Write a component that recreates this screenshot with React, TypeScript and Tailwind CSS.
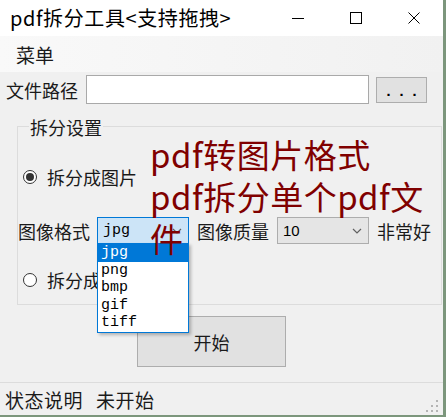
import React from "react";

const cjk = "font-['Noto_Sans_CJK_SC','Liberation_Sans',sans-serif]";

function Chevron() {
  return (
    <svg width="10" height="6" viewBox="0 0 10 6">
      <polyline points="1,1 5,5 9,1" fill="none" stroke="#606060" strokeWidth="1.2" />
    </svg>
  );
}

function Radio({ checked, label, clip }: { checked?: boolean; label: string; clip?: boolean }) {
  return (
    <div className="h-[20px] flex items-center pl-[5px]">
      <div className="w-[14px] h-[14px] rounded-full border border-[#333333] bg-white flex items-center justify-center shrink-0">
        {checked && <div className="w-[8px] h-[8px] rounded-full bg-[#333333]" />}
      </div>
      <span
        className={`ml-[10px] text-[18px] leading-[20px] text-[#1a1a1a] whitespace-nowrap ${clip ? "w-[51px] overflow-hidden" : ""}`}
      >
        {label}
      </span>
    </div>
  );
}

function WindowControls() {
  return (
    <div className="ml-auto flex">
      <div className="w-[58px] h-[36px] flex items-center justify-center">
        <div className="w-[12px] h-px bg-black" />
      </div>
      <div className="w-[58px] h-[36px] flex items-center justify-center">
        <div className="w-[12px] h-[12px] border border-black" />
      </div>
      <div className="w-[58px] h-[36px] flex items-center justify-center">
        <svg width="12" height="12" viewBox="0 0 12 12">
          <path d="M0.5 0.5 L11.5 11.5 M11.5 0.5 L0.5 11.5" stroke="black" strokeWidth="1" />
        </svg>
      </div>
    </div>
  );
}

function Grip() {
  const dots = [
    [9, 0],
    [4, 5],
    [9, 5],
    [-1, 10],
    [4, 10],
    [9, 10],
  ];
  return (
    <svg width="12" height="13" viewBox="-1 0 12 13" className="ml-auto mr-[5px] mt-[14px]">
      {dots.map(([x, y], i) => (
        <rect key={i} x={x} y={y} width="2" height="2" fill="#b4b4b4" />
      ))}
    </svg>
  );
}

export default function App() {
  const formats = ["jpg", "png", "bmp", "gif", "tiff"];
  return (
    <div
      className={`relative w-[446px] h-[417px] flex flex-col bg-[#f0f0f0] border-r-[3px] border-b-2 border-[#7c967c] overflow-hidden text-black ${cjk}`}
    >
      {/* title bar */}
      <div className="h-[36px] bg-white flex items-center shrink-0">
        <span className="pl-[10px] text-[20px] tracking-[0.6px] leading-none">pdf拆分工具&lt;支持拖拽&gt;</span>
        <WindowControls />
      </div>

      {/* menu */}
      <div className="h-[36px] shrink-0 bg-linear-to-r from-[#f9f9f9] to-[#f1f1f1] flex items-center pl-[16px]">
        <span className="text-[19px] leading-none text-[#1a1a1a]">菜单</span>
      </div>

      {/* path row */}
      <div className="mt-[3px] h-[29px] flex items-center shrink-0">
        <span className="pl-[6px] w-[86px] text-[18px] leading-none text-[#1a1a1a]">文件路径</span>
        <div className="w-[283px] h-[29px] border border-[#a9a9a9] bg-white" />
        <div className="ml-[7px] w-[51px] h-[26px] bg-[#e1e1e1] border border-[#adadad] flex items-center justify-center">
          <span className="font-['Liberation_Mono',monospace] font-bold text-[15px] tracking-[4px] pl-[4px] mt-[6px] leading-none">
            ...
          </span>
        </div>
      </div>

      {/* group box */}
      <div className="relative mt-[22px] ml-[17px] w-[425px] h-[179px] border border-[#dcdcdc] shrink-0">
        <span className="absolute -top-[10px] left-[11px] px-[1px] bg-[#f0f0f0] text-[18px] leading-[20px] text-[#1a1a1a]">
          拆分设置
        </span>
        <div className="pt-[40px]">
          <Radio checked label="拆分成图片" />
          <div className="mt-[30px] h-[27px] flex items-center">
            <span className="w-[72px] text-[18px] leading-none text-[#1a1a1a]">图像格式</span>
            <div className="ml-[7px] w-[92px] h-[27px] bg-[#cce4f7] border border-[#0078d7] flex items-center pl-[5px] pr-[6px]">
              <span className="font-['Liberation_Mono',monospace] text-[15px] leading-none">jpg</span>
              <div className="ml-auto">
                <Chevron />
              </div>
            </div>
            <span className="ml-[8px] w-[72px] text-[18px] leading-none text-[#1a1a1a]">图像质量</span>
            <div className="ml-[8px] w-[92px] h-[27px] bg-[#e5e5e5] border border-[#adadad] flex items-center pl-[5px] pr-[6px]">
              <span className="font-['Liberation_Sans',sans-serif] text-[15px] leading-none">10</span>
              <div className="ml-auto">
                <Chevron />
              </div>
            </div>
            <span className="ml-[8px] text-[18px] leading-none text-[#1a1a1a]">非常好</span>
          </div>
          <div className="mt-[26px]">
            <Radio label="拆分成PDF" clip />
          </div>
        </div>
      </div>

      {/* start button */}
      <div className="mt-[11px] ml-[137px] w-[149px] h-[51px] shrink-0 bg-[#e1e1e1] border border-[#adadad] flex items-center justify-center">
        <span className="text-[18px] leading-none text-[#1a1a1a]">开始</span>
      </div>

      <div className="mt-[15px] h-px bg-[#dcdcdc] shrink-0" />

      {/* status bar */}
      <div className="flex-1 flex items-center">
        <span className="pl-[5px] text-[19px] tracking-[0.5px] leading-none text-[#1a1a1a]">状态说明</span>
        <span className="ml-[13px] text-[19px] tracking-[0.5px] leading-none text-[#1a1a1a]">未开始</span>
        <Grip />
      </div>

      {/* open dropdown list */}
      <div className="absolute left-[97px] top-[243px] w-[92px] h-[90px] border border-[#0078d7] bg-white shadow-[2px_2px_3px_rgba(0,0,0,0.25)] font-['Liberation_Mono',monospace] text-[15px]">
        {formats.map((f, i) => (
          <div
            key={f}
            className={`h-[17.6px] leading-[17.6px] pl-[3px] ${i === 0 ? "bg-[#0078d7] text-white" : "text-black"}`}
          >
            {f}
          </div>
        ))}
      </div>

      {/* floating red label */}
      <div className="absolute left-[150px] top-[133px] w-[290px] text-[33px] tracking-[0.5px] leading-[42px] text-[#800000]">
        <div>pdf转图片格式</div>
        <div>pdf拆分单个pdf文</div>
        <div>件</div>
      </div>
    </div>
  );
}
